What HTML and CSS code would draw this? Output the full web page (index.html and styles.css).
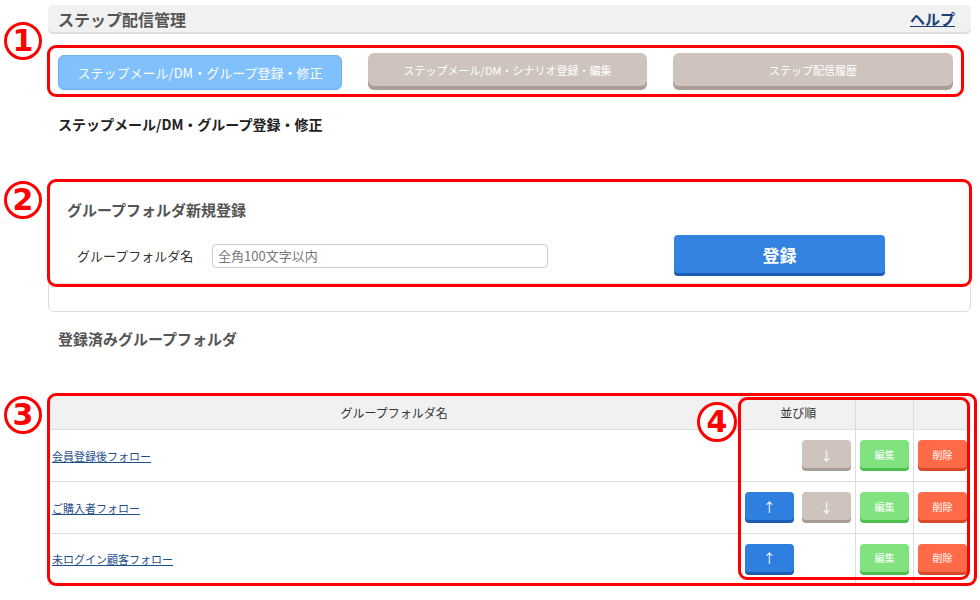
FILE: index.html
```html
<!DOCTYPE html>
<html lang="ja">
<head>
    <meta charset="UTF-8">
    <meta name="viewport" content="width=device-width, initial-scale=1.0">
    <title>ステップ配信管理</title>
    <link rel="stylesheet" href="styles.css">
</head>
<body>

<div class="page">
    <div class="titlebar">
        <h1>ステップ配信管理</h1>
        <a class="help" href="#">ヘルプ</a>
    </div>

    <nav class="tabs">
        <a class="tab active" href="#">ステップメール/DM・グループ登録・修正</a>
        <a class="tab" href="#">ステップメール/DM・シナリオ登録・編集</a>
        <a class="tab" href="#">ステップ配信履歴</a>
    </nav>

    <h2 class="page-heading">ステップメール/DM・グループ登録・修正</h2>

    <section class="panel">
        <div class="panel-body">
            <h3>グループフォルダ新規登録</h3>
            <form class="form-row">
                <label for="folderName">グループフォルダ名</label>
                <input type="text" id="folderName" placeholder="全角100文字以内">
                <button type="button" class="btn-submit">登録</button>
            </form>
        </div>
    </section>

    <h3 class="list-heading">登録済みグループフォルダ</h3>

    <table class="folders">
        <thead>
            <tr>
                <th class="col-name">グループフォルダ名</th>
                <th colspan="2">並び順</th>
                <th class="col-btn"></th>
                <th class="col-btn last"></th>
            </tr>
        </thead>
        <tbody>
            <tr>
                <td class="name"><a href="#">会員登録後フォロー</a></td>
                <td class="col-btn"></td>
                <td class="col-btn"><span class="btn btn-down">↓</span></td>
                <td class="col-btn"><span class="btn btn-edit">編集</span></td>
                <td class="col-btn"><span class="btn btn-delete">削除</span></td>
            </tr>
            <tr>
                <td class="name"><a href="#">ご購入者フォロー</a></td>
                <td class="col-btn"><span class="btn btn-up">↑</span></td>
                <td class="col-btn"><span class="btn btn-down">↓</span></td>
                <td class="col-btn"><span class="btn btn-edit">編集</span></td>
                <td class="col-btn"><span class="btn btn-delete">削除</span></td>
            </tr>
            <tr>
                <td class="name"><a href="#">未ログイン顧客フォロー</a></td>
                <td class="col-btn"><span class="btn btn-up">↑</span></td>
                <td class="col-btn"></td>
                <td class="col-btn"><span class="btn btn-edit">編集</span></td>
                <td class="col-btn"><span class="btn btn-delete">削除</span></td>
            </tr>
        </tbody>
    </table>
</div>

<!-- annotation marks -->
<div class="mark-box box1"></div>
<div class="mark-box box2"></div>
<div class="mark-box box3"></div>
<div class="mark-box box4"></div>
<div class="mark-num num1">1</div>
<div class="mark-num num2">2</div>
<div class="mark-num num3">3</div>
<div class="mark-num num4">4</div>

</body>
</html>
```

FILE: styles.css
```css
body {
    margin: 0;
    background: #fff;
    font-family: "Noto Sans CJK JP", "Noto Sans", sans-serif;
    color: #333;
}
.page {
    width: 923px;
    margin-left: 48px;
    padding-top: 5px;
}
.titlebar {
    height: 27px;
    display: flex;
    align-items: center;
    justify-content: space-between;
    background: #f1f1f1;
    border-radius: 5px;
    box-shadow: 0 2px 0 #dcdcdc;
    padding: 0 16px 0 10px;
}
.titlebar h1 {
    margin: 0;
    font-size: 16px;
    line-height: 20px;
    font-weight: bold;
    color: #555;
}
.help {
    font-size: 15px;
    font-weight: bold;
    color: #1b3f75;
    line-height: 20px;
}
.tabs {
    display: flex;
    align-items: flex-start;
    gap: 26px;
    margin-top: 21px;
    padding-left: 10px;
}
.tab {
    display: flex;
    align-items: center;
    justify-content: center;
    width: 279px;
    height: 33px;
    background: #cfc3bd;
    border-radius: 6px;
    box-shadow: 0 4px 0 #a99d96;
    color: #fff;
    font-size: 11px;
    text-decoration: none;
}
.tab:last-child {
    width: 280px;
}
.tab.active {
    box-sizing: border-box;
    width: 284px;
    height: 35px;
    margin-top: 2px;
    background: #80c0fd;
    border: 1px solid #6eb2f2;
    box-shadow: none;
    font-size: 13px;
}
.page-heading {
    margin: 24px 0 0 10px;
    font-size: 14px;
    line-height: 20px;
    font-weight: bold;
    color: #222;
}
.panel {
    margin-top: 46px;
    border: 1px solid #ddd;
    border-radius: 6px;
    padding-bottom: 27px;
}
.panel-body {
    padding: 19px 0 7px 18px;
    border-bottom: 1px solid #e6e6e6;
}
.panel-body h3 {
    margin: 0;
    font-size: 15px;
    line-height: 20px;
    font-weight: bold;
    color: #555;
}
.form-row {
    display: flex;
    align-items: center;
    height: 41px;
    margin-top: 15px;
}
.form-row label {
    width: 135px;
    margin-left: 10px;
    font-size: 13px;
    color: #333;
}
.form-row input {
    box-sizing: border-box;
    width: 336px;
    height: 24px;
    border: 1px solid #ccc;
    border-radius: 4px;
    padding: 0 5px;
    font-family: inherit;
    font-size: 13px;
}
.form-row input::placeholder {
    color: #777;
}
.btn-submit {
    width: 211px;
    height: 38px;
    margin: -3px 0 0 126px;
    background: #3483e1;
    border: none;
    border-radius: 4px;
    box-shadow: 0 3px 0 #1d5cb6;
    color: #fff;
    font-family: inherit;
    font-size: 17px;
    font-weight: bold;
}
.list-heading {
    margin: 17px 0 0 10px;
    font-size: 15px;
    line-height: 20px;
    font-weight: bold;
    color: #555;
}
.folders {
    width: 923px;
    margin-top: 47px;
    border-collapse: collapse;
    font-size: 12px;
}
.folders th {
    height: 33px;
    padding: 0;
    background: #f1f1f1;
    font-weight: normal;
    color: #333;
    border: 1px solid #ddd;
    border-top: none;
}
.folders td {
    height: 51px;
    padding: 0;
    border: 1px solid #ddd;
    border-left: none;
    border-right: none;
}
.folders th:first-child {
    border-left: none;
}
.folders th.last {
    border-right: none;
}
.folders .col-name {
    width: 692px;
}
.folders .col-btn {
    width: 57px;
    text-align: center;
}
.folders td.col-btn + td.col-btn + td.col-btn {
    border-left: 1px solid #ddd;
}
.folders td.name {
    padding-left: 4px;
    font-size: 11px;
}
.folders td.name a {
    color: #1e4e8c;
}
.folders tbody tr:last-child td {
    height: 50px;
    border-bottom: 1px solid #ddd;
}
.btn {
    display: inline-flex;
    align-items: center;
    justify-content: center;
    width: 49px;
    height: 28px;
    margin-top: -3px;
    border-radius: 4px;
    color: #fff;
    font-size: 10px;
}
.btn-up {
    background: #2f7fdf;
    box-shadow: 0 3px 0 #1c5cb4;
    font-size: 13px;
}
.btn-down {
    background: #cfc3bd;
    box-shadow: 0 3px 0 #a99d96;
    font-size: 13px;
}
.btn-edit {
    background: #80e380;
    box-shadow: 0 3px 0 #4cbf4c;
}
.btn-delete {
    background: #ff6b48;
    box-shadow: 0 3px 0 #d8492a;
}

/* annotation marks */
.mark-box {
    position: absolute;
    box-sizing: border-box;
    border: 3px solid #f00;
    border-radius: 9px;
}
.box1 { left: 47px; top: 45px; width: 917px; height: 52px; }
.box2 { left: 47px; top: 179px; width: 925px; height: 108px; }
.box3 { left: 47px; top: 393px; width: 930px; height: 193px; }
.box4 { left: 738px; top: 397px; width: 232px; height: 183px; }
.mark-num {
    position: absolute;
    box-sizing: border-box;
    width: 38px;
    height: 38px;
    border: 3px solid #f00;
    border-radius: 50%;
    background: #fff;
    color: #f00;
    font-family: "DejaVu Sans", "Liberation Sans", sans-serif;
    font-size: 30px;
    font-weight: bold;
    line-height: 32px;
    text-align: center;
}
.num1 { left: 4px; top: 22px; }
.num2 { left: 4px; top: 181px; }
.num3 { left: 4px; top: 396px; }
.num4 { left: 697px; top: 402px; width: 40px; height: 40px; line-height: 34px; }
```
